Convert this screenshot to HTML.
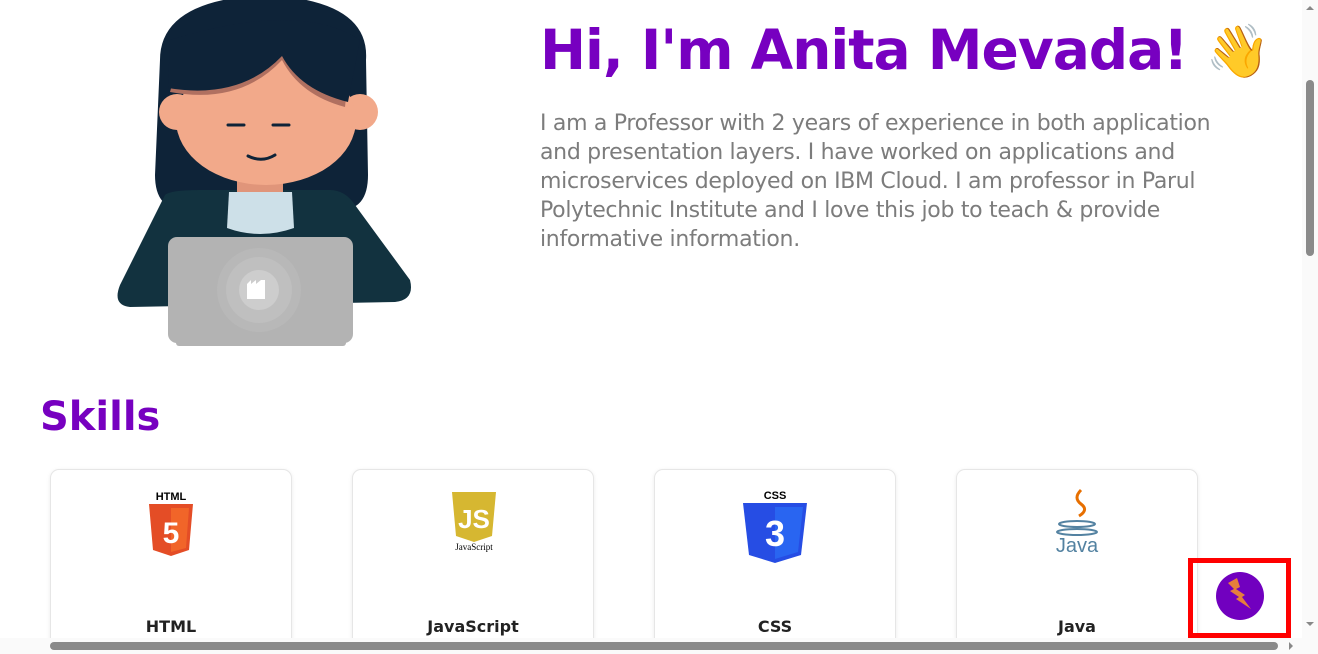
<!DOCTYPE html>
<html style="overflow:hidden"><head><style>
body{margin:0;width:1318px;height:654px;overflow:hidden;background:#fff;font-family:"DejaVu Sans","Liberation Sans",sans-serif;position:relative}
h1{position:absolute;left:540px;top:18px;margin:0;font-size:55px;font-weight:bold;color:#7700c0;letter-spacing:-1px;white-space:nowrap}
p{position:absolute;left:540px;top:109px;margin:0;width:700px;font-size:22px;line-height:29px;color:#7c7c7c;letter-spacing:-0.3px}
h2{position:absolute;left:40px;top:394px;margin:0;font-size:40px;font-weight:bold;color:#7700c0}
.card{position:absolute;top:469px;width:240px;height:190px;border:1px solid #e6e6e6;border-radius:9px;box-shadow:0 1px 4px rgba(0,0,0,.08);background:#fff}
.card span{position:absolute;top:147px;left:0;width:100%;text-align:center;font-weight:bold;font-size:16px;color:#222}
.vs{position:absolute;right:0;top:0;width:16px;height:638px;background:#fafafa}
.hs{position:absolute;left:0;top:638px;width:1318px;height:16px;background:#fafafa}
</style></head><body>
<svg width="440" height="350" style="position:absolute;left:0;top:0">
<path d="M160 60 Q160 0 265 -5 Q370 0 366 60 L368 175 Q368 210 340 210 L185 210 Q155 210 155 175 Z" fill="#0e2338"/>
<path d="M165 195 Q170 190 200 190 L330 190 Q345 190 355 205 L410 280 Q415 300 395 302 L130 307 Q112 305 120 285 Z" fill="#12323f"/>
<rect x="237" y="175" width="46" height="20" fill="#e0957a"/>
<path d="M229 192 L292 192 L294 228 Q260 240 227 228 Z" fill="#cde0e8"/>
<circle cx="177" cy="112" r="18" fill="#f2a98a"/><circle cx="360" cy="112" r="18" fill="#f2a98a"/>
<ellipse cx="266" cy="120" rx="90" ry="65" fill="#f2a98a"/>
<path d="M170 92 Q240 105 282 60 Q300 95 345 107 L350 60 Q300 20 180 55 Z" fill="#b07060"/>
<path d="M168 88 Q240 100 282 56 Q300 90 348 102 L360 40 Q300 0 170 40 Z" fill="#0e2338"/>
<path d="M228 125 h16 M273 125 h16" stroke="#0e2338" stroke-width="3" stroke-linecap="round"/>
<path d="M248 156 Q262 163 275 155" stroke="#0e2338" stroke-width="3" fill="none" stroke-linecap="round"/>
<rect x="168" y="237" width="185" height="106" rx="9" fill="#b3b3b3"/>
<rect x="176" y="340" width="170" height="6" rx="3" fill="#b3b3b3"/>
<circle cx="259" cy="290" r="42" fill="#b8b8b8"/><circle cx="259" cy="290" r="33" fill="#bfbfbf"/><circle cx="259" cy="290" r="20" fill="#cdcdcd"/>
<path d="M247 284 l4 -4 v4 l5 -4 v4 l5 -4 h4 v19 h-18 Z" fill="#fff"/>
</svg>
<h1>Hi, I'm Anita Mevada! <span style="font-size:52px">👋</span></h1>
<p>I am a Professor with 2 years of experience in both application and presentation layers. I have worked on applications and microservices deployed on IBM Cloud. I am professor in Parul Polytechnic Institute and I love this job to teach &amp; provide informative information.</p>
<h2>Skills</h2>
<div class="card" style="left:50px"><svg width="240" height="80" style="position:absolute;top:18px;left:0"><text x="120" y="12" text-anchor="middle" font-size="11" font-weight="bold" font-family="Liberation Sans">HTML</text><path d="M98 16h44l-4 46-18 6-18-6z" fill="#e44d26"/><path d="M120 20h18l-3 40-15 4z" fill="#f16529"/><text x="120" y="55" text-anchor="middle" font-size="30" font-weight="bold" fill="#fff" font-family="Liberation Sans">5</text></svg><span>HTML</span></div>
<div class="card" style="left:352px"><svg width="240" height="80" style="position:absolute;top:20px;left:0"><path d="M99 2h44l-4 44-18 6-18-6z" fill="#d6b731"/><text x="121" y="38" text-anchor="middle" font-size="26" font-weight="bold" fill="#fff" font-family="Liberation Sans">JS</text><text x="121" y="60" text-anchor="middle" font-size="9" font-family="Liberation Serif">JavaScript</text></svg><span>JavaScript</span></div>
<div class="card" style="left:654px"><svg width="240" height="80" style="position:absolute;top:18px;left:0"><text x="120" y="11" text-anchor="middle" font-size="11" font-weight="bold" font-family="Liberation Sans">CSS</text><path d="M88 15h64l-6 52-26 8-26-8z" fill="#264de4"/><path d="M120 19h28l-5 45-23 7z" fill="#2965f1"/><text x="120" y="58" text-anchor="middle" font-size="36" font-weight="bold" fill="#fff" font-family="Liberation Sans">3</text></svg><span>CSS</span></div>
<div class="card" style="left:956px"><svg width="240" height="90" style="position:absolute;top:18px;left:0"><path d="M124 2q-8 8 0 14t-2 12" stroke="#e76f00" stroke-width="3" fill="none"/><ellipse cx="120" cy="36" rx="18" ry="3" fill="none" stroke="#5382a1" stroke-width="2"/><ellipse cx="120" cy="44" rx="20" ry="3" fill="none" stroke="#5382a1" stroke-width="2"/><text x="120" y="64" text-anchor="middle" font-size="20" fill="#5382a1" font-family="Liberation Sans">Java</text></svg><span>Java</span></div>
<div class="vs"><div style="position:absolute;left:4px;top:80px;width:8px;height:176px;background:#8a8a8a;border-radius:4px"></div><div style="position:absolute;left:4px;top:6px;border:4px solid transparent;border-bottom-color:#888;border-top:0"></div><div style="position:absolute;left:4px;top:622px;border:4px solid transparent;border-top-color:#888;border-bottom:0"></div></div>
<div class="hs"><div style="position:absolute;left:50px;top:4px;width:1228px;height:8px;background:#8a8a8a;border-radius:4px"></div><div style="position:absolute;left:1289px;top:4px;border:4px solid transparent;border-left-color:#888;border-right:0"></div></div>
<div style="position:absolute;left:1188px;top:558px;width:93px;height:70px;border:5px solid #f00"></div>
<svg width="50" height="50" style="position:absolute;left:1215px;top:571px"><circle cx="25" cy="25" r="24" fill="#7100bf"/><path d="M13 12l9-5 3 9-4 2 9 6-3 2 9 12-15-10 3-2-9-6 4-2z" fill="#e67e3c"/></svg>
</body></html>
